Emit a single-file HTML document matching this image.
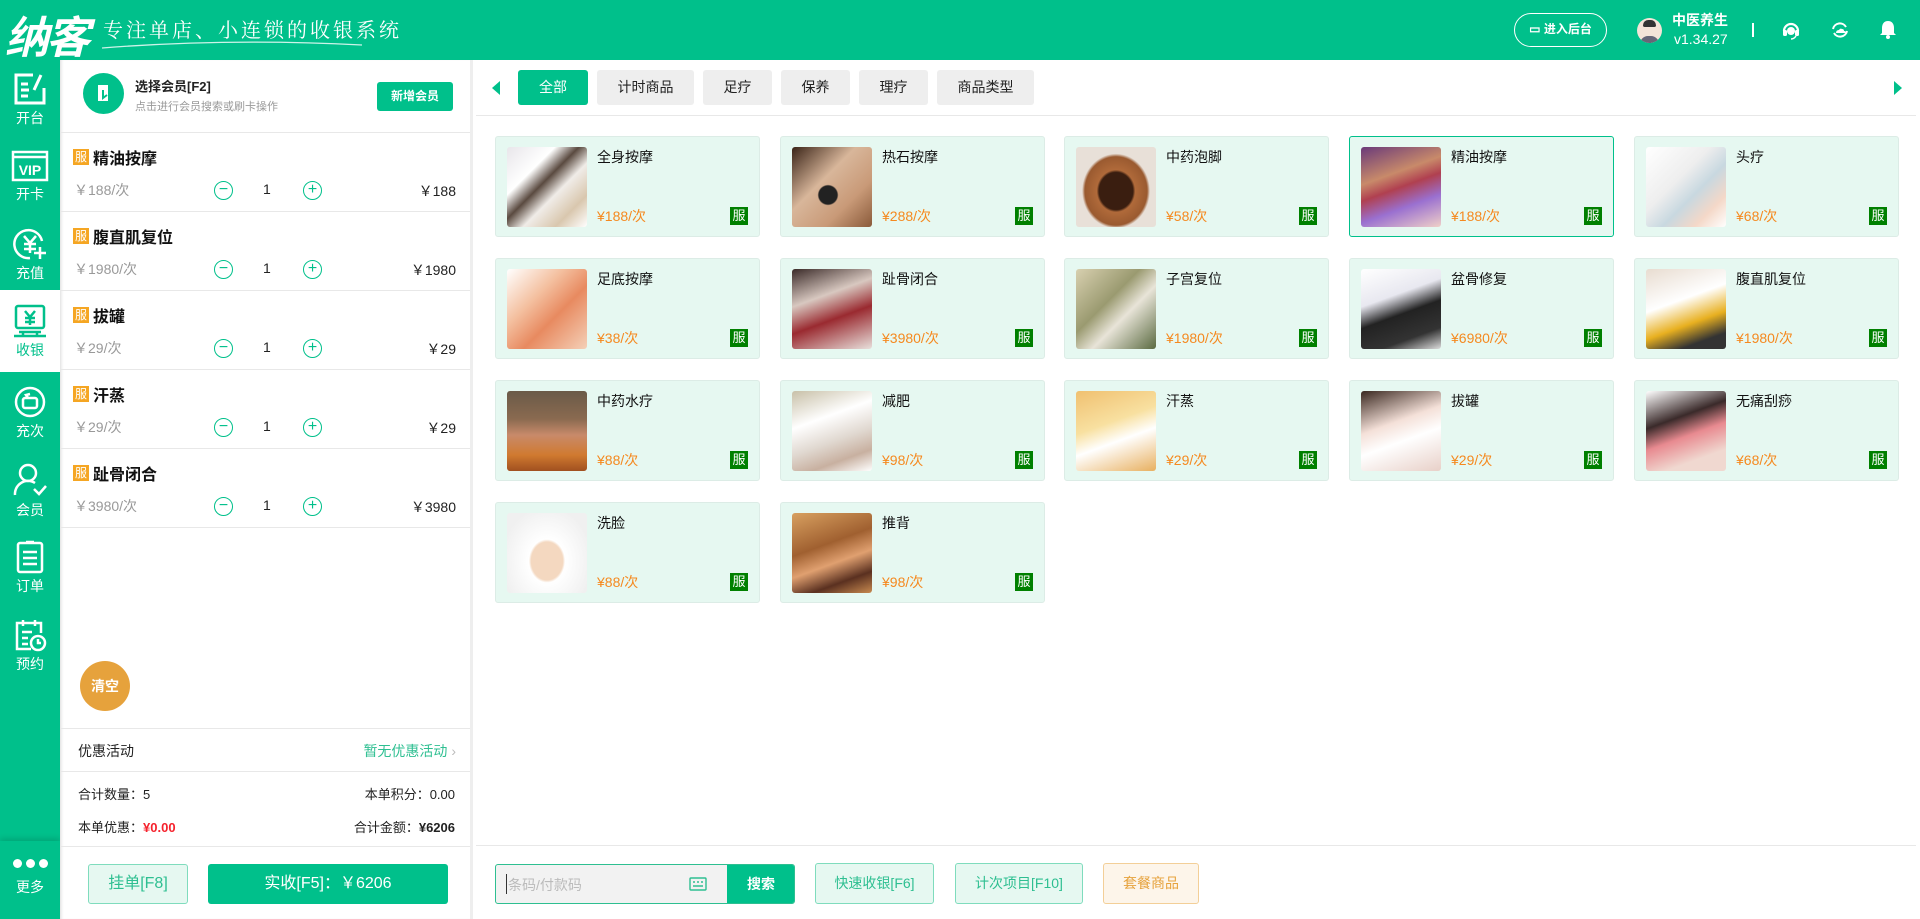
<!DOCTYPE html>
<html><head><meta charset="utf-8"><style>
*{box-sizing:border-box;margin:0;padding:0}
body{width:1920px;height:919px;overflow:hidden;background:#fff;font-family:"Liberation Sans","Noto Sans CJK SC",sans-serif;position:relative;color:#222}
.abs{position:absolute}
.hdr{left:0;top:0;width:1920px;height:60px;background:#00c08b}
.side{left:0;top:60px;width:60px;height:859px;background:#00c08b}
.si{position:absolute;left:0;width:60px;height:80px;color:#fff;text-align:center;font-size:14px}
.si svg{display:block;margin:10px auto 2px}
.cart{left:60px;top:60px;width:413px;height:859px;background:#fff;border-right:3px solid #eee;box-shadow:inset 3px 0 3px -2px rgba(0,0,0,.15)}
.row{position:absolute;left:0;width:410px;height:79px;border-bottom:1px solid #e8e8e8}
.bd{position:absolute;width:16px;height:16px;background:#f5a623;color:#fff;font-size:12px;line-height:16px;text-align:center}
.nm{position:absolute;left:33px;top:12px;font-size:16px;font-weight:bold;color:#111}
.pr{position:absolute;left:14px;top:47px;font-size:14px;color:#999}
.circ{position:absolute;top:48px;width:19px;height:19px;border:1.5px solid #00c08b;border-radius:50%;color:#00c08b;font-size:16px;line-height:15px;text-align:center}
.q{position:absolute;left:203px;top:48px;font-size:14px}
.tot{position:absolute;right:14px;top:48px;font-size:14px}
.tab{position:absolute;top:70px;height:35px;background:#eee;border-radius:3px;font-size:14px;line-height:35px;text-align:center;color:#222}
.card{position:absolute;width:265px;height:101px;background:#e6f8f1;border:1px solid #dcece6;border-radius:3px}
.card .im{position:absolute;left:11px;top:10px;width:80px;height:80px;border-radius:3px}
.card .t{position:absolute;left:101px;top:10px;font-size:14px;color:#111}
.card .p{position:absolute;left:101px;top:69px;font-size:14px;color:#f5891f}
.card .b{position:absolute;left:234px;top:70px;width:18px;height:18px;background:#008000;color:#fff;font-size:13px;line-height:18px;text-align:center}
.btn{position:absolute;height:41px;border-radius:3px;font-size:14px;line-height:39px;text-align:center}
</style></head><body>
<div class="abs hdr">
 <div class="abs" style="left:5px;top:2px;font-size:44px;font-weight:bold;color:#fff;letter-spacing:-3px;font-style:italic">纳客</div>
 <div class="abs" style="left:103px;top:14px;font-size:20px;color:#fff;letter-spacing:3px;font-family:'Noto Serif CJK SC',serif">专注单店、小连锁的收银系统</div>
 <svg class="abs" style="left:100px;top:38px" width="265" height="12"><path d="M2 10 Q130 0 262 7" stroke="#fff" stroke-width="1.3" fill="none" opacity=".8"/></svg>
 <div class="abs" style="left:1514px;top:13px;width:93px;height:34px;border:1.5px solid #fff;border-radius:17px;color:#fff;font-size:12px;font-weight:bold;line-height:31px;text-align:center">▭ 进入后台</div>
 <div class="abs" style="left:1637px;top:18px;width:25px;height:25px;border-radius:50%;background:#f4e4d8;overflow:hidden"><div class="abs" style="left:6px;top:2px;width:13px;height:7px;background:#333;border-radius:6px 6px 2px 2px"></div><div class="abs" style="left:3px;top:18px;width:19px;height:10px;background:#667;border-radius:8px 8px 0 0"></div></div>
 <div class="abs" style="left:1672px;top:10px;font-size:14px;font-weight:bold;color:#fff">中医养生</div>
 <div class="abs" style="left:1674px;top:31px;font-size:14px;color:#fff">v1.34.27</div>
 <div class="abs" style="left:1752px;top:23px;width:2px;height:14px;background:#fff"></div>
 <svg class="abs" style="left:1781px;top:20px" width="20" height="20"><path d="M3 11a7 7 0 0114 0" stroke="#fff" stroke-width="2.2" fill="none"/><rect x="2" y="10" width="4" height="6" rx="1.5" fill="#fff"/><rect x="14" y="10" width="4" height="6" rx="1.5" fill="#fff"/><circle cx="10" cy="11" r="4" fill="#fff"/><path d="M15 16q-2 3-5 3" stroke="#fff" stroke-width="1.5" fill="none"/></svg>
 <svg class="abs" style="left:1830px;top:20px" width="20" height="20"><path d="M3 9a7 7 0 0113-2M17 11a7 7 0 01-13 2" stroke="#fff" stroke-width="2" fill="none"/><path d="M6 13q0-3 3-3q1-2 3-1q2 0 2 2q2 0 2 2z" fill="#fff"/></svg>
 <svg class="abs" style="left:1879px;top:19px" width="18" height="21"><path d="M9 2c-4 0-6 3-6 7v5l-2 2h16l-2-2V9c0-4-2-7-6-7z" fill="#fff"/><circle cx="9" cy="18" r="2" fill="#fff"/></svg>
</div>
<div class="abs side">
 <div class="si" style="top:2px"><svg width="34" height="34" viewBox="0 0 34 34" fill="none" stroke="#fff" stroke-width="3"><path d="M20 3H3v28h28V16"/><path d="M8 12h7M8 18h8M8 24h7"/><path d="M28 3l-7 15"/></svg>开台</div>
 <div class="si" style="top:80px"><svg width="38" height="32" viewBox="0 0 38 32" fill="none" stroke="#fff" stroke-width="2.5"><rect x="2" y="2" width="34" height="28"/><path d="M2 7h34"/><text x="19" y="25" fill="#fff" stroke="none" font-size="14" font-weight="bold" text-anchor="middle" font-family="Liberation Sans">VIP</text></svg>开卡</div>
 <div class="si" style="top:157px"><svg width="34" height="34" viewBox="0 0 34 34" fill="none" stroke="#fff" stroke-width="2.5"><path d="M29 14A14 14 0 1017 31"/><path d="M11 9l6 7 6-7M17 16v10M11 17h12M11 22h12"/><path d="M27 20v12M21 26h12"/></svg>充值</div>
 <div class="si" style="top:230px;background:#fff;height:82px;color:#00c08b;padding-top:4px"><svg width="34" height="34" viewBox="0 0 34 34" fill="none" stroke="#00c08b" stroke-width="2.5"><rect x="3" y="2" width="28" height="22" rx="2"/><path d="M12 7l5 6 5-6M17 13v8M12 14h10M12 18h10"/><path d="M10 28v4M24 28v4M1 32h32M6 28h22"/></svg>收银</div>
 <div class="si" style="top:315px"><svg width="34" height="34" viewBox="0 0 34 34" fill="none" stroke="#fff" stroke-width="2.5"><circle cx="17" cy="17" r="14"/><rect x="10" y="13" width="14" height="10" rx="2"/><path d="M15 13l-2-3 4-1"/></svg>充次</div>
 <div class="si" style="top:392px"><svg width="36" height="36" viewBox="0 0 36 36" fill="none" stroke="#fff" stroke-width="2.5"><circle cx="16" cy="11" r="8"/><path d="M3 33a13 13 0 0120-12"/><path d="M22 27l5 5 7-8"/></svg>会员</div>
 <div class="si" style="top:470px"><svg width="34" height="34" viewBox="0 0 34 34" fill="none" stroke="#fff" stroke-width="2.5"><rect x="5" y="3" width="24" height="29" rx="2"/><path d="M13 2h8M10 12h14M10 18h14M10 24h14"/></svg>订单</div>
 <div class="si" style="top:548px"><svg width="34" height="34" viewBox="0 0 34 34" fill="none" stroke="#fff" stroke-width="2.5"><path d="M18 31H4V5h24v10"/><path d="M10 2v6M22 2v6M9 14h10M9 20h6M9 26h6"/><circle cx="25" cy="25" r="7"/><path d="M25 21v4h3"/></svg>预约</div>
 <div class="abs" style="left:0;top:781px;width:60px;height:78px;background:#00c08b;box-shadow:0 -3px 5px rgba(0,0,0,.12);color:#fff;text-align:center;font-size:14px">
  <div style="margin-top:18px;font-size:0"><span style="display:inline-block;width:9px;height:9px;border-radius:50%;background:#fff;margin:0 2px"></span><span style="display:inline-block;width:9px;height:9px;border-radius:50%;background:#fff;margin:0 2px"></span><span style="display:inline-block;width:9px;height:9px;border-radius:50%;background:#fff;margin:0 2px"></span></div>
  <div style="margin-top:9px">更多</div></div>
</div>
<div class="abs cart">
 <div class="abs" style="left:23px;top:13px;width:41px;height:41px;border-radius:50%;background:#00c08b"><svg width="41" height="41"><rect x="15" y="12" width="10" height="16" fill="#fff"/><path d="M20 17v8l4-3" stroke="#00c08b" stroke-width="2" fill="none"/></svg></div>
 <div class="abs" style="left:75px;top:16px;font-size:13px;font-weight:bold">选择会员[F2]</div>
 <div class="abs" style="left:75px;top:38px;font-size:11px;color:#999">点击进行会员搜索或刷卡操作</div>
 <div class="abs" style="left:317px;top:22px;width:76px;height:29px;background:#00c08b;border-radius:3px;color:#fff;font-size:12px;font-weight:bold;line-height:29px;text-align:center">新增会员</div>
 <div class="abs" style="left:0;top:72px;width:410px;border-top:1px solid #e8e8e8"></div>
 <div class="row" style="top:73px"><div class="bd" style="left:13px;top:16px">服</div><div class="nm">精油按摩</div><div class="pr">￥188/次</div><div class="circ" style="left:154px">−</div><div class="q">1</div><div class="circ" style="left:243px">+</div><div class="tot">￥188</div></div>
 <div class="row" style="top:152px"><div class="bd" style="left:13px;top:16px">服</div><div class="nm">腹直肌复位</div><div class="pr">￥1980/次</div><div class="circ" style="left:154px">−</div><div class="q">1</div><div class="circ" style="left:243px">+</div><div class="tot">￥1980</div></div>
 <div class="row" style="top:231px"><div class="bd" style="left:13px;top:16px">服</div><div class="nm">拔罐</div><div class="pr">￥29/次</div><div class="circ" style="left:154px">−</div><div class="q">1</div><div class="circ" style="left:243px">+</div><div class="tot">￥29</div></div>
 <div class="row" style="top:310px"><div class="bd" style="left:13px;top:16px">服</div><div class="nm">汗蒸</div><div class="pr">￥29/次</div><div class="circ" style="left:154px">−</div><div class="q">1</div><div class="circ" style="left:243px">+</div><div class="tot">￥29</div></div>
 <div class="row" style="top:389px"><div class="bd" style="left:13px;top:16px">服</div><div class="nm">趾骨闭合</div><div class="pr">￥3980/次</div><div class="circ" style="left:154px">−</div><div class="q">1</div><div class="circ" style="left:243px">+</div><div class="tot">￥3980</div></div>
 <div class="abs" style="left:20px;top:601px;width:50px;height:50px;border-radius:50%;background:#e6a23c;color:#fff;font-size:14px;font-weight:bold;line-height:50px;text-align:center">清空</div>
 <div class="abs" style="left:0;top:668px;width:410px;border-top:1px solid #e8e8e8"></div>
 <div class="abs" style="left:18px;top:681px;font-size:14px">优惠活动</div>
 <div class="abs" style="right:14px;top:681px;font-size:14px;color:#2ebf91">暂无优惠活动 <span style="color:#bbb">›</span></div>
 <div class="abs" style="left:0;top:711px;width:410px;border-top:1px solid #e8e8e8"></div>
 <div class="abs" style="left:18px;top:724px;font-size:13px">合计数量：5</div>
 <div class="abs" style="right:15px;top:724px;font-size:13px">本单积分：0.00</div>
 <div class="abs" style="left:18px;top:757px;font-size:13px">本单优惠：<b style="color:#f5222d">¥0.00</b></div>
 <div class="abs" style="right:15px;top:757px;font-size:13px">合计金额：<b>¥6206</b></div>
 <div class="abs" style="left:0;top:786px;width:410px;border-top:1px solid #e8e8e8"></div>
 <div class="btn" style="left:28px;top:804px;width:100px;height:40px;background:#e6f8f1;border:1px solid #7fdcbd;color:#2ebf91;font-size:16px;line-height:38px">挂单[F8]</div>
 <div class="btn" style="left:148px;top:804px;width:240px;height:40px;background:#00c08b;color:#fff;font-size:16px;line-height:40px">实收[F5]：￥6206</div>
</div>
<svg class="abs" style="left:491px;top:81px" width="10" height="14"><path d="M9 0v14L1 7z" fill="#00c08b"/></svg>
<div class="tab" style="left:518px;width:70px;background:#00c08b;color:#fff">全部</div>
<div class="tab" style="left:597px;width:97px">计时商品</div>
<div class="tab" style="left:703px;width:69px">足疗</div>
<div class="tab" style="left:781px;width:69px">保养</div>
<div class="tab" style="left:859px;width:69px">理疗</div>
<div class="tab" style="left:937px;width:97px">商品类型</div>
<svg class="abs" style="left:1893px;top:81px" width="10" height="14"><path d="M1 0v14L9 7z" fill="#00c08b"/></svg>
<div class="abs" style="left:476px;top:115px;width:1440px;border-top:1px solid #e8e8e8"></div>

<div class="card" style="left:495px;top:136px"><div class="im" style="background:linear-gradient(135deg,#e8e6ea 0%,#fff 30%,#5a4a40 45%,#f0ece8 60%,#d9c7ae 80%,#fff)"></div><div class="t">全身按摩</div><div class="p">¥188/次</div><div class="b">服</div></div>
<div class="card" style="left:780px;top:136px"><div class="im" style="background:radial-gradient(circle at 45% 60%,#222 0 14%,transparent 16%),linear-gradient(135deg,#3a2418,#d8b69a 40%,#c99a78 70%,#8a5a3a)"></div><div class="t">热石按摩</div><div class="p">¥288/次</div><div class="b">服</div></div>
<div class="card" style="left:1064px;top:136px"><div class="im" style="background:radial-gradient(ellipse at 50% 55%,#3a1e10 0 30%,#b06a3a 34%,#9a5a30 55%,#e8e0d8 60%)"></div><div class="t">中药泡脚</div><div class="p">¥58/次</div><div class="b">服</div></div>
<div class="card" style="left:1349px;top:136px;border:1.5px solid #00c08b"><div class="im" style="background:linear-gradient(160deg,#6a3a7a,#c88a6a 35%,#b04050 50%,#9a70d0 70%,#f0d0c8)"></div><div class="t">精油按摩</div><div class="p">¥188/次</div><div class="b">服</div></div>
<div class="card" style="left:1634px;top:136px"><div class="im" style="background:linear-gradient(135deg,#fff,#eee 40%,#c8d8e0 60%,#f4d8c8 80%,#fff)"></div><div class="t">头疗</div><div class="p">¥68/次</div><div class="b">服</div></div>

<div class="card" style="left:495px;top:258px"><div class="im" style="background:linear-gradient(135deg,#fff,#f4c0a0 35%,#e88a60 60%,#f4d0b8)"></div><div class="t">足底按摩</div><div class="p">¥38/次</div><div class="b">服</div></div>
<div class="card" style="left:780px;top:258px"><div class="im" style="background:linear-gradient(160deg,#3a2a28,#d8c8c0 35%,#9a2a30 60%,#e8e0dc)"></div><div class="t">趾骨闭合</div><div class="p">¥3980/次</div><div class="b">服</div></div>
<div class="card" style="left:1064px;top:258px"><div class="im" style="background:linear-gradient(135deg,#d8d0b0,#9a9a70 40%,#e8e4d8 60%,#5a6a40)"></div><div class="t">子宫复位</div><div class="p">¥1980/次</div><div class="b">服</div></div>
<div class="card" style="left:1349px;top:258px"><div class="im" style="background:linear-gradient(160deg,#fff,#e8e8f0 35%,#222 55%,#333 80%,#ddd)"></div><div class="t">盆骨修复</div><div class="p">¥6980/次</div><div class="b">服</div></div>
<div class="card" style="left:1634px;top:258px"><div class="im" style="background:linear-gradient(160deg,#e8dcd0,#fff 40%,#e8b020 65%,#333 85%)"></div><div class="t">腹直肌复位</div><div class="p">¥1980/次</div><div class="b">服</div></div>

<div class="card" style="left:495px;top:380px"><div class="im" style="background:linear-gradient(180deg,#6a5a48,#8a6a50 35%,#c88a6a 55%,#d07a30 80%,#a05020)"></div><div class="t">中药水疗</div><div class="p">¥88/次</div><div class="b">服</div></div>
<div class="card" style="left:780px;top:380px"><div class="im" style="background:linear-gradient(160deg,#c8c0a8,#fff 35%,#e0d8d0 60%,#c8b0a0 80%,#fff)"></div><div class="t">减肥</div><div class="p">¥98/次</div><div class="b">服</div></div>
<div class="card" style="left:1064px;top:380px"><div class="im" style="background:linear-gradient(160deg,#f0c070,#f8e0a0 40%,#fff 60%,#e8b060)"></div><div class="t">汗蒸</div><div class="p">¥29/次</div><div class="b">服</div></div>
<div class="card" style="left:1349px;top:380px"><div class="im" style="background:linear-gradient(160deg,#3a2820,#f4e0d8 40%,#fff 60%,#e8d0c8)"></div><div class="t">拔罐</div><div class="p">¥29/次</div><div class="b">服</div></div>
<div class="card" style="left:1634px;top:380px"><div class="im" style="background:linear-gradient(160deg,#fff,#3a2a2a 35%,#e88a90 55%,#f0d8d0 80%)"></div><div class="t">无痛刮痧</div><div class="p">¥68/次</div><div class="b">服</div></div>

<div class="card" style="left:495px;top:502px"><div class="im" style="background:radial-gradient(ellipse at 50% 60%,#f4d8c0 0 28%,#fff 32%,#f0f0f0 80%)"></div><div class="t">洗脸</div><div class="p">¥88/次</div><div class="b">服</div></div>
<div class="card" style="left:780px;top:502px"><div class="im" style="background:linear-gradient(160deg,#d8a060,#a06030 40%,#e0a070 60%,#5a3020 80%,#c88a50)"></div><div class="t">推背</div><div class="p">¥98/次</div><div class="b">服</div></div>

<div class="abs" style="left:476px;top:845px;width:1440px;border-top:1px solid #e8e8e8"></div>
<div class="abs" style="left:495px;top:864px;width:300px;height:40px;border:1px solid #2ebf91;border-radius:3px;background:#f2f2f2;overflow:hidden">
 <div class="abs" style="left:10px;top:9px;width:1px;height:20px;background:#333"></div>
 <div class="abs" style="left:12px;top:10px;font-size:14px;color:#bbb">条码/付款码</div>
 <svg class="abs" style="left:193px;top:12px" width="18" height="14"><rect x="1" y="1" width="16" height="12" rx="1" fill="none" stroke="#2ebf91" stroke-width="1.4"/><path d="M4 5h2M8 5h2M12 5h2M4 9h10" stroke="#2ebf91" stroke-width="1.4"/></svg>
 <div class="abs" style="left:231px;top:0;width:68px;height:40px;background:#00c08b;color:#fff;font-size:14px;font-weight:bold;line-height:38px;text-align:center">搜索</div>
</div>
<div class="btn" style="left:815px;top:863px;width:119px;background:#e6f8f1;border:1px solid #7fdcbd;color:#2ebf91">快速收银[F6]</div>
<div class="btn" style="left:955px;top:863px;width:128px;background:#e6f8f1;border:1px solid #7fdcbd;color:#2ebf91">计次项目[F10]</div>
<div class="btn" style="left:1103px;top:863px;width:96px;background:#fdf5ea;border:1px solid #f3cf98;color:#e6a23c">套餐商品</div>
</body></html>
